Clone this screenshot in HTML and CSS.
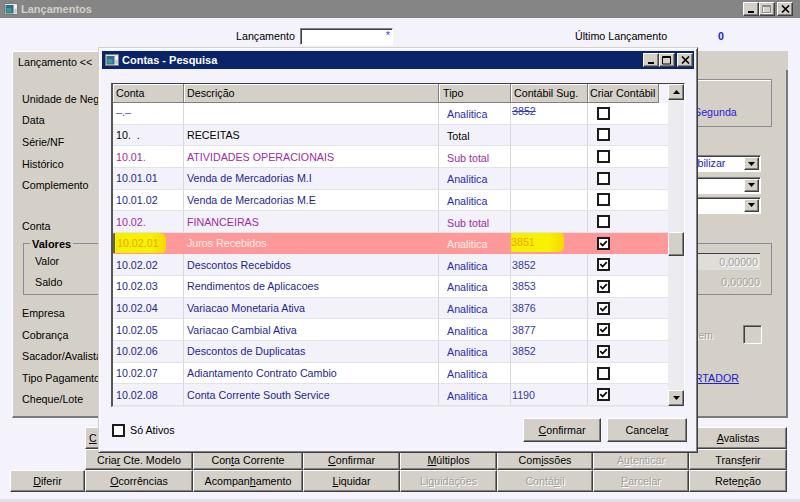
FILE: index.html
```html
<!DOCTYPE html>
<html lang="pt-BR">
<head>
<meta charset="utf-8">
<title>Lançamentos</title>
<link rel="stylesheet" href="styles.css">
</head>
<body>
<div class="screen">
  <div class="win">
    <div class="titlebar inactive">
      <svg class="appico" width="14" height="12" viewBox="0 0 14 12"><rect x="0.5" y="0.5" width="13" height="11" fill="#e8e6e0" stroke="#7a7a7a"/><rect x="1.5" y="2" width="8" height="8.5" fill="#2f6d96"/><rect x="2.5" y="5" width="5" height="4.5" fill="#3d9a8a"/><rect x="10.5" y="2.5" width="2" height="2" fill="#fff"/><rect x="10.5" y="6" width="2" height="4" fill="#b8c8d8"/></svg>
      <span class="ttl">Lançamentos</span>
      <div class="tbtns">
        <span class="tbtn"><svg width="9" height="8" viewBox="0 0 9 8"><rect x="1" y="6" width="6" height="2" fill="#000"/></svg></span>
        <span class="tbtn dis"><svg width="10" height="9" viewBox="0 0 10 9"><path d="M1.5 1.5h7v7h-7z" fill="none" stroke="#fff"/><path d="M0.5 0.5h8v7h-8z M0.5 1.5h8" fill="none" stroke="#8a8a8a"/></svg></span>
        <span class="tbtn close"><svg width="9" height="8" viewBox="0 0 9 8"><path d="M1 0.5l7 7M8 0.5l-7 7" stroke="#000" stroke-width="1.6"/></svg></span>
      </div>
    </div>

    <div class="topbar">
      <span class="tl-lanc">Lançamento</span>
      <span class="inp"><span class="ast">*</span></span>
      <span class="tl-ult">Último Lançamento</span>
      <span class="ult-val">0</span>
    </div>

    <div class="panel">
      <div class="tabstrip"><div class="tab">Lançamento &lt;&lt;</div></div>
      <div class="page">
        <div class="blockA">
          <div class="labcol">
            <div class="lrow"><span class="lbl">Unidade de Neg</span></div>
            <div class="lrow"><span class="lbl">Data</span></div>
          </div>
          <div class="grpSeg"><span class="seg">Segunda</span></div>
        </div>
        <div class="lrow"><span class="lbl">Série/NF</span></div>
        <div class="lrow"><span class="lbl">Histórico</span>
          <div class="cmb"><span class="cmbtxt">Contabilizar</span><span class="cmbbtn"><svg width="7" height="4" viewBox="0 0 7 4"><path d="M0 0H7L3.5 4Z"/></svg></span></div>
        </div>
        <div class="lrow"><span class="lbl">Complemento</span>
          <div class="cmb"><span class="cmbtxt"></span><span class="cmbbtn"><svg width="7" height="4" viewBox="0 0 7 4"><path d="M0 0H7L3.5 4Z"/></svg></span></div>
        </div>
        <div class="lrow short">
          <div class="cmb"><span class="cmbtxt"></span><span class="cmbbtn"><svg width="7" height="4" viewBox="0 0 7 4"><path d="M0 0H7L3.5 4Z"/></svg></span></div>
        </div>
        <div class="lrow"><span class="lbl">Conta</span></div>
        <fieldset class="valores">
          <legend>Valores</legend>
          <div class="vrow">Valor<span class="fld1">0,00000</span></div>
          <div class="vrow last">Saldo<span class="fld2">0,00000</span></div>
        </fieldset>
        <div class="lrow first-after"><span class="lbl">Empresa</span></div>
        <div class="lrow"><span class="lbl">Cobrança</span>
          <div class="rgrp"><span class="distxt">Mensagem</span><span class="bigcb"></span></div>
        </div>
        <div class="lrow"><span class="lbl">Sacador/Avalista</span></div>
        <div class="lrow"><span class="lbl">Tipo Pagamento</span><span class="link">PORTADOR</span></div>
        <div class="lrow"><span class="lbl">Cheque/Lote</span></div>
      </div>
    </div>

    <div class="btngrid">
      <span class="btn col2 clip"><span><u>C</u></span></span>
      <span class="btn col8"><span><u>A</u>valistas</span></span>
      <span class="btn col2"><span>Cria<u>r</u> Cte. Modelo</span></span>
      <span class="btn"><span>Con<u>t</u>a Corrente</span></span>
      <span class="btn"><span><u>C</u>onfirmar</span></span>
      <span class="btn"><span><u>M</u>últiplos</span></span>
      <span class="btn"><span>Com<u>i</u>ssões</span></span>
      <span class="btn dis"><span>A<u>u</u>tenticar</span></span>
      <span class="btn"><span>Trans<u>f</u>erir</span></span>
      <span class="btn"><span><u>D</u>iferir</span></span>
      <span class="btn"><span><u>O</u>corrências</span></span>
      <span class="btn"><span>Acompan<u>h</u>amento</span></span>
      <span class="btn"><span><u>L</u>iquidar</span></span>
      <span class="btn dis"><span>Li<u>q</u>uidações</span></span>
      <span class="btn dis"><span>Contá<u>b</u>il</span></span>
      <span class="btn dis"><span><u>P</u>arcelar</span></span>
      <span class="btn"><span>Rete<u>n</u>ção</span></span>
    </div>
  </div>

  <div class="dlg">
    <div class="titlebar active">
      <svg class="appico" width="14" height="12" viewBox="0 0 14 12"><rect x="0.5" y="0.5" width="13" height="11" fill="#e8e6e0" stroke="#7a7a7a"/><rect x="1.5" y="2" width="8" height="8.5" fill="#2f6d96"/><rect x="2.5" y="5" width="5" height="4.5" fill="#3d9a8a"/><rect x="10.5" y="2.5" width="2" height="2" fill="#fff"/><rect x="10.5" y="6" width="2" height="4" fill="#b8c8d8"/></svg>
      <span class="ttl">Contas - Pesquisa</span>
      <div class="tbtns">
        <span class="tbtn"><svg width="9" height="8" viewBox="0 0 9 8"><rect x="1" y="6" width="6" height="2" fill="#000"/></svg></span>
        <span class="tbtn"><svg width="10" height="9" viewBox="0 0 10 9"><path d="M0.5 0.5h8v7.5h-8z M0.5 1.5h8" fill="none" stroke="#000"/></svg></span>
        <span class="tbtn close"><svg width="9" height="8" viewBox="0 0 9 8"><path d="M1 0.5l7 7M8 0.5l-7 7" stroke="#000" stroke-width="1.6"/></svg></span>
      </div>
    </div>
    <div class="dbody">
      <div class="grid">
        <div class="cells">
          <div class="hdr">
            <span class="hc h1">Conta</span>
            <span class="hc h2">Descrição</span>
            <span class="hc h3">Tipo</span>
            <span class="hc h4">Contábil Sug.</span>
            <span class="hc h5">Criar Contábil</span>
          </div>
          <div class="r odd blue"><span class="c1 dash">–.–</span><span class="c2"></span><span class="c3">Analitica</span><span class="c4 strike">3852</span><span class="c5"><span class="cb"></span></span></div>
          <div class="r even black"><span class="c1">10. &nbsp;.</span><span class="c2">RECEITAS</span><span class="c3">Total</span><span class="c4"></span><span class="c5"><span class="cb"></span></span></div>
          <div class="r odd purple"><span class="c1">10.01.</span><span class="c2">ATIVIDADES OPERACIONAIS</span><span class="c3">Sub total</span><span class="c4"></span><span class="c5"><span class="cb"></span></span></div>
          <div class="r even blue"><span class="c1">10.01.01</span><span class="c2">Venda de Mercadorias M.I</span><span class="c3">Analitica</span><span class="c4"></span><span class="c5"><span class="cb"></span></span></div>
          <div class="r odd blue"><span class="c1">10.01.02</span><span class="c2">Venda de Mercadorias M.E</span><span class="c3">Analitica</span><span class="c4"></span><span class="c5"><span class="cb"></span></span></div>
          <div class="r even purple"><span class="c1">10.02.</span><span class="c2">FINANCEIRAS</span><span class="c3">Sub total</span><span class="c4"></span><span class="c5"><span class="cb"></span></span></div>
          <div class="r sel"><span class="c1"><span class="mark m1">10.02.01</span></span><span class="c2">Juros Recebidos</span><span class="c3">Analitica</span><span class="c4"><span class="mark m2">3851</span></span><span class="c5"><span class="cb on"><svg width="9" height="9" viewBox="0 0 9 9"><path d="M1.3 4.2L3.6 6.5L7.8 2.2" fill="none" stroke="#000" stroke-width="1.7"/></svg></span></span></div>
          <div class="r even blue"><span class="c1">10.02.02</span><span class="c2">Descontos Recebidos</span><span class="c3">Analitica</span><span class="c4">3852</span><span class="c5"><span class="cb on"><svg width="9" height="9" viewBox="0 0 9 9"><path d="M1.3 4.2L3.6 6.5L7.8 2.2" fill="none" stroke="#000" stroke-width="1.7"/></svg></span></span></div>
          <div class="r odd blue"><span class="c1">10.02.03</span><span class="c2">Rendimentos de Aplicacoes</span><span class="c3">Analitica</span><span class="c4">3853</span><span class="c5"><span class="cb on"><svg width="9" height="9" viewBox="0 0 9 9"><path d="M1.3 4.2L3.6 6.5L7.8 2.2" fill="none" stroke="#000" stroke-width="1.7"/></svg></span></span></div>
          <div class="r even blue"><span class="c1">10.02.04</span><span class="c2">Variacao Monetaria Ativa</span><span class="c3">Analitica</span><span class="c4">3876</span><span class="c5"><span class="cb on"><svg width="9" height="9" viewBox="0 0 9 9"><path d="M1.3 4.2L3.6 6.5L7.8 2.2" fill="none" stroke="#000" stroke-width="1.7"/></svg></span></span></div>
          <div class="r odd blue"><span class="c1">10.02.05</span><span class="c2">Variacao Cambial Ativa</span><span class="c3">Analitica</span><span class="c4">3877</span><span class="c5"><span class="cb on"><svg width="9" height="9" viewBox="0 0 9 9"><path d="M1.3 4.2L3.6 6.5L7.8 2.2" fill="none" stroke="#000" stroke-width="1.7"/></svg></span></span></div>
          <div class="r even blue"><span class="c1">10.02.06</span><span class="c2">Descontos de Duplicatas</span><span class="c3">Analitica</span><span class="c4">3852</span><span class="c5"><span class="cb on"><svg width="9" height="9" viewBox="0 0 9 9"><path d="M1.3 4.2L3.6 6.5L7.8 2.2" fill="none" stroke="#000" stroke-width="1.7"/></svg></span></span></div>
          <div class="r odd blue"><span class="c1">10.02.07</span><span class="c2">Adiantamento Contrato Cambio</span><span class="c3">Analitica</span><span class="c4"></span><span class="c5"><span class="cb"></span></span></div>
          <div class="r even blue"><span class="c1">10.02.08</span><span class="c2">Conta Corrente South Service</span><span class="c3">Analitica</span><span class="c4">1190</span><span class="c5"><span class="cb on"><svg width="9" height="9" viewBox="0 0 9 9"><path d="M1.3 4.2L3.6 6.5L7.8 2.2" fill="none" stroke="#000" stroke-width="1.7"/></svg></span></span></div>
        </div>
        <div class="vscroll">
          <span class="sbtn"><svg width="7" height="4" viewBox="0 0 7 4"><path d="M3.5 0L7 4H0Z"/></svg></span>
          <div class="track"><span class="thumb"></span></div>
          <span class="sbtn"><svg width="7" height="4" viewBox="0 0 7 4"><path d="M0 0H7L3.5 4Z"/></svg></span>
        </div>
      </div>
      <div class="dfoot">
        <span class="cb ativos"></span><span class="ativos-lbl">Só Ativos</span>
        <span class="dbtn b-conf"><span><u>C</u>onfirmar</span></span>
        <span class="dbtn b-canc"><span>Cancela<u>r</u></span></span>
      </div>
    </div>
  </div>
</div>
</body>
</html>
```

FILE: styles.css
```css
* { box-sizing: border-box; }
html, body { margin: 0; padding: 0; }
body {
  width: 800px; height: 502px; overflow: hidden;
  font-family: "Liberation Sans", Arial, sans-serif;
  font-size: 10.7px; color: #000; background: #f4f2fb;
}
.screen { position: relative; width: 800px; height: 502px; }

.win {
  width: 800px; height: 502px; background: #f4f2fb;
  display: flex; flex-direction: column;
  border-bottom: 3px solid #e2e0e8;
}

/* title bars */
.titlebar { height: 18px; flex: none; display: flex; align-items: center; padding: 0 7px 0 4px; }
.titlebar.inactive { background: #858585; color: #d4d0c8; }
.titlebar.active { background: #0a246a; color: #fff; padding: 0 1px 0 3px; }
.appico { flex: none; margin-right: 3px; }
.ttl { flex: 1; font-weight: bold; font-size: 11px; }
.tbtns { display: flex; }
.tbtn {
  width: 16px; height: 14px; background: #d4d0c8;
  border: 1px solid; border-color: #fff #404040 #404040 #fff;
  box-shadow: inset -1px -1px #808080;
  display: flex; align-items: center; justify-content: center;
}
.tbtn.close { margin-left: 2px; }

/* top bar */
.topbar { height: 33px; flex: none; display: flex; align-items: center; padding: 3px 0 0 236px; }
.tl-lanc { width: 64px; }
.inp {
  width: 93px; height: 17px; background: #fff;
  border: 1px solid; border-color: #808080 #fff #fff #808080;
  box-shadow: inset 1px 1px #404040;
  display: flex; justify-content: flex-end; padding: 1px 2px 0 0;
}
.ast { color: #3a3aff; line-height: 10px; font-size: 11px; }
.tl-ult { margin-left: 182px; width: 143px; }
.ult-val { color: #1a1ae6; font-weight: bold; }

/* main panel */
.panel {
  margin-left: 12px; width: 776px; height: 367px; flex: none;
  background: #d4d0c8; display: flex; flex-direction: column;
}
.tabstrip { height: 19px; flex: none; display: flex; }
.tab {
  width: 86px; padding: 1px 0 0 5px; display: flex; align-items: center;
  border-top: 1px solid #fff; border-left: 1px solid #fff;
}
.page {
  flex: 1; border-left: 1px solid #fff;
  border-right: 2px solid #7a797e; border-bottom: 2px solid #7a797e;
  padding: 9px 14px 0 9px;
  display: flex; flex-direction: column;
}
.blockA { display: flex; height: 52.2px; }
.labcol { padding-top: 9px; }
.lrow { height: 21.6px; display: flex; align-items: center; white-space: nowrap; }
.lbl { white-space: nowrap; }
.lrow.short { height: 19px; }
.lrow.first-after { margin-top: 7.4px; }
.grpSeg {
  margin-left: auto; width: 150px; height: 48px;
  border: 1px solid #8c8a92; box-shadow: inset 1px 1px #fff;
  padding: 26px 0 0 71px;
}
.seg { color: #2525d8; }

.cmb {
  margin-left: auto; margin-right: 11px; width: 150px; height: 17px;
  background: #fff; display: flex;
  border: 1px solid; border-color: #808080 #fff #fff #808080;
  box-shadow: inset 1px 1px #404040;
  padding: 1px;
}
.cmbtxt { flex: 1; color: #2020c8; padding-left: 56px; line-height: 13px; }
.cmbbtn {
  width: 15px; height: 13px; background: #d4d0c8;
  border: 1px solid; border-color: #fff #404040 #404040 #fff;
  box-shadow: inset -1px -1px #808080;
  display: flex; align-items: center; justify-content: center;
}

.valores {
  margin: 0 0 0 1px; padding: 0 11px 1px 6px;
  border: 1px solid #8c8a92; min-width: 0;
}
.valores legend { font-weight: bold; padding: 0 2px; line-height: 14px; font-size: 11px; }
.vrow { height: 21.6px; display: flex; align-items: center; padding-left: 5px; }
.vrow.last { height: 20.6px; }
.fld1 {
  margin-left: auto; width: 120px; height: 17px; background: #dfddd8;
  border-top: 1px solid #404040; border-left: 1px solid #808080;
  text-align: right; padding: 2px 2px 0 0;
  color: #a3a19b; text-shadow: 1px 1px #fff;
}
.fld2 { margin-left: auto; color: #a3a19b; text-shadow: 1px 1px #fff; }

.rgrp { margin-left: auto; margin-right: 10px; display: flex; align-items: center; }
.distxt { color: #a3a19b; text-shadow: 1px 1px #fff; }
.bigcb {
  margin-left: 30px; width: 19px; height: 19px; background: #d4d0c8;
  border: 1px solid; border-color: #808080 #fff #fff #808080;
  box-shadow: inset 1px 1px #404040;
}
.link { margin-left: auto; margin-right: 33px; color: #2020d0; text-decoration: underline; }

/* bottom buttons */
.btngrid {
  margin: 9px 0 0 10px; width: 777px; flex: none;
  display: grid;
  grid-template-columns: 75px 108px 110px 97px 97px 96px 96px 98px;
  grid-template-rows: 22px 21px 22px;
}
.btn {
  background: #d4d0c8;
  border: 1px solid; border-color: #fff #404040 #404040 #fff;
  box-shadow: inset -1px -1px #808080;
  display: flex; align-items: center; justify-content: center;
  white-space: nowrap; overflow: hidden;
}
.btn.clip { justify-content: flex-start; padding-left: 3px; }
.btn.dis { color: #a19f99; text-shadow: 1px 1px #fff; }
.col2 { grid-column: 2; }
.col8 { grid-column: 8; }

/* dialog */
.dlg {
  position: absolute; left: 98px; top: 47px; width: 600px; height: 406px;
  background: #f4f2fb;
  border: 1px solid; border-color: #d4d0c8 #404040 #404040 #d4d0c8;
  box-shadow: inset 1px 1px #fff, inset -1px -1px #808080;
  padding: 3px; display: flex; flex-direction: column;
}
.dbody { flex: 1; padding: 14px 9px 0 9px; display: flex; flex-direction: column; }
.grid {
  height: 324px; display: flex; background: #fff;
  border-top: 1px solid #404040; border-left: 2px solid #555;
  border-right: 1px solid #fff; border-bottom: 1px solid #e8e6ee;
}
.cells { width: 555px; }
.hdr { display: flex; height: 19px; background: #f4f2fb; }
.hc {
  height: 19px; background: #d4d0c8; display: flex; align-items: center;
  padding-left: 3px;
  border-right: 1px solid #808080; border-bottom: 1px solid #808080;
  box-shadow: inset 1px 1px #fff; white-space: nowrap; overflow: hidden;
}
.h1 { width: 71px; }
.h2 { width: 255px; }
.h3 { width: 72px; padding-left: 4px; }
.h4 { width: 77px; }
.h5 { width: 71px; padding-left: 2px; }

.r {
  display: grid; grid-template-columns: 71px 255px 72px 77px 80px;
  height: 21.643px;
}
.r.odd { background: #fff; }
.r.even { background: #f3f1fa; }
.r > span {
  display: flex; align-items: center; white-space: nowrap; overflow: hidden;
  border-right: 1px solid #d9d8de; border-bottom: 1px solid #e3e2e8;
}
.r > span.c5 { border-right: none; padding-left: 9px; }
.c1, .c2 { padding-left: 3px; }
.c3 { padding: 2px 0 0 8px; }
.c4 { padding-left: 1px; color: #3838a8; }
.r.blue .c1, .r.blue .c2 { color: #1f1f92; }
.r.blue .c3 { color: #2b2bb6; }
.r.purple .c1, .r.purple .c2, .r.purple .c3 { color: #a12ca1; }
.r.black .c1, .r.black .c2, .r.black .c3 { color: #000; }
.dash { color: #4a4ad0 !important; padding-bottom: 3px; }
.strike { text-decoration: line-through; padding-bottom: 4px; color: #3a3ac0; }

.r.sel { background: #ff9898; }
.r.sel > span { border-color: transparent; }
.r.sel .c2, .r.sel .c3 { color: #ffeeee; }
.r.sel .c1 { padding-left: 0; }
.mark {
  display: flex; align-items: center; height: 21px; color: #f0a400;
  background: linear-gradient(90deg, #f4ee00, #f8f200 70%, #f5d800);
  border-radius: 2px 6px 6px 2px;
}
.m1 { width: 53px; padding-left: 2px; border-left: 2px solid #6a6a30; }
.m2 { width: 54px; padding-left: 1px; margin-top: -3px; margin-left: -2px; }

.cb {
  width: 13px; height: 13px; background: #fff; flex: none;
  border: 2px solid #1c1c1c;
  display: flex; align-items: center; justify-content: center;
}

.vscroll { width: 16px; display: flex; flex-direction: column; background: #ecebef; }
.sbtn {
  height: 16px; background: #d4d0c8; flex: none;
  border: 1px solid; border-color: #fff #404040 #404040 #fff;
  box-shadow: inset -1px -1px #808080;
  display: flex; align-items: center; justify-content: center;
}
.track { flex: 1; padding-top: 132px; }
.thumb {
  display: block; height: 24px; background: #d4d0c8;
  border: 1px solid; border-color: #fff #404040 #404040 #fff;
  box-shadow: inset -1px -1px #808080;
}

.dfoot { display: flex; align-items: center; margin-top: 11px; height: 24px; }
.ativos { margin-left: 1px; }
.ativos-lbl { margin-left: 5px; }
.dbtn {
  height: 24px; background: #d4d0c8;
  border: 1px solid; border-color: #fff #404040 #404040 #fff;
  box-shadow: inset -1px -1px #808080;
  display: flex; align-items: center; justify-content: center;
}
.b-conf { margin-left: auto; width: 78px; }
.b-canc { margin-left: 6px; width: 80px; margin-right: -2px; }
```
